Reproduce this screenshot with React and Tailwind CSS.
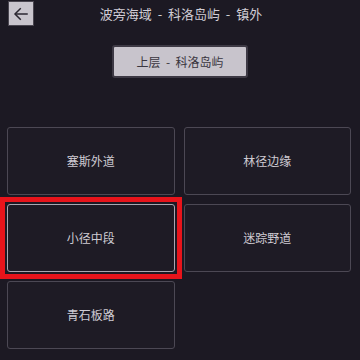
import { useState } from "react";

const places = ["塞斯外道", "林径边缘", "小径中段", "迷踪野道", "青石板路"];

const BackArrow = () => (
  <svg viewBox="0 0 24 24" className="w-[18px] h-[18px]" fill="none" stroke="#2a2630" strokeWidth="2" strokeLinecap="square">
    <path d="M20 12H5" />
    <path d="M11 5l-7 7 7 7" />
  </svg>
);

const App = () => {
  const [selected, setSelected] = useState(2);

  return (
    <div
      className="w-[360px] h-[360px] bg-[#1c1923] overflow-hidden"
      style={{ fontFamily: '"Noto Sans CJK SC", "Noto Sans", sans-serif' }}
    >
      {/* header */}
      <div className="relative h-[28px] pt-[1px]">
        <button className="absolute left-[8px] top-[1px] w-[26px] h-[25px] bg-[#c9c5cd] border border-[#4a4650] flex items-center justify-center">
          <BackArrow />
        </button>
        <p className="text-center text-[13px] leading-[26px] text-[#d2ced6] whitespace-pre pl-[2px]">
          波旁海域  -  科洛岛屿  -  镇外
        </p>
      </div>

      <div className="flex justify-center mt-[17px]">
        <button className="w-[136px] h-[33px] bg-[#c8c4cc] border-2 border-[#3d3944] rounded-[3px] text-[12px] text-[#3a3640] whitespace-pre">
          上层  -  科洛岛屿
        </button>
      </div>

      {/* cards */}
      <div className="grid grid-cols-2 gap-[9px] pl-[7px] pr-[9px] mt-[49px]">
        {places.map((name, i) => (
          <button
            key={name}
            onClick={() => setSelected(i)}
            className={
              i === selected
                ? "relative h-[68px] bg-[#1e1b25] border border-[#aaa6b0] rounded-[3px] text-[12px] text-[#cfcbd3]"
                : "relative h-[68px] bg-[#1e1b25] border border-[#4c4854] rounded-[3px] text-[12px] text-[#cfcbd3]"
            }
          >
            {name}
            {i === selected && (
              <span className="absolute -inset-[8px] border-[5px] border-[#e8141b] pointer-events-none" />
            )}
          </button>
        ))}
      </div>
    </div>
  );
};

export default App;
